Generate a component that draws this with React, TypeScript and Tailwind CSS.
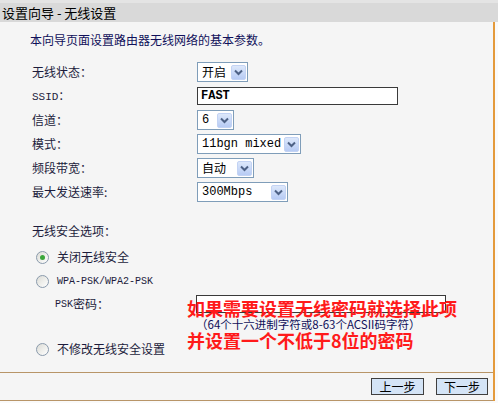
import React from "react";

const mono = "font-['Liberation_Mono','Noto_Sans_CJK_SC',monospace]";

function Arrow() {
  return (
    <span className="flex items-center justify-center w-[15px] h-[15px] mr-[1px] rounded-[2px] bg-gradient-to-b from-[#dde8fb] to-[#b7cbf4] border border-[#c3d3f4]">
      <svg width="9" height="7" viewBox="0 0 9 7" aria-hidden="true">
        <path d="M1 1.5 L4.5 5 L8 1.5" fill="none" stroke="#4d6185" strokeWidth="2" />
      </svg>
    </span>
  );
}

function Select({ value, width, latin }: { value: string; width: string; latin?: boolean }) {
  return (
    <div className={`flex items-center justify-between h-[20px] border border-[#7f9db9] bg-white ${width}`}>
      <span className={`pl-[4px] leading-none ${latin ? `${mono} text-[12px]` : "text-[12px]"} text-black`}>
        {value}
      </span>
      <Arrow />
    </div>
  );
}

function Radio({ checked }: { checked?: boolean }) {
  return (
    <span className="flex items-center justify-center w-[13px] h-[13px] rounded-full border border-[#8a9aac] bg-gradient-to-br from-[#dcdcd6] to-white">
      {checked && <span className="w-[5px] h-[5px] rounded-full bg-[#3aa63a]" />}
    </span>
  );
}

function Row({ label, children }: { label: React.ReactNode; children: React.ReactNode }) {
  return (
    <div className="flex items-center h-[24px]">
      <div className="w-[197px] pl-[32px] text-[12px] text-[#1c1c3c]">{label}</div>
      {children}
    </div>
  );
}

export default function App() {
  return (
    <div className="w-[498px] h-[403px] bg-[#fafafa] font-['Noto_Sans_CJK_SC',sans-serif] overflow-hidden">
      {/* Title bar */}
      <div className="h-[22px] bg-[#d9d9d9] border-t-[3px] border-[#e4e4e4] flex items-center pl-[2px] text-[13px] text-black">
        设置向导 - 无线设置
      </div>

      <div className="w-[495px] border-r-[2px] border-[#e49a3c]">
        {/* Body */}
        <div className="relative h-[351px] bg-[#f5f5f5] border-b border-[#b89568]">
          <p className="pt-[10px] pl-[30px] text-[12px] leading-[16px] text-[#10105a]">
            本向导页面设置路由器无线网络的基本参数。
          </p>

          <div className="mt-[12px]">
            <Row label="无线状态：">
              <Select value="开启" width="w-[51px]" />
            </Row>
            <Row label={<span className={`${mono} text-[11px]`}>SSID：</span>}>
              <div className="flex items-center h-[18px] w-[201px] border border-[#3a3a3a] bg-white pl-[3px]">
                <span className={`${mono} text-[12px] text-black font-bold`}>FAST</span>
              </div>
            </Row>
            <Row label="信道：">
              <Select value="6" width="w-[37px]" latin />
            </Row>
            <Row label="模式：">
              <Select value="11bgn mixed" width="w-[104px]" latin />
            </Row>
            <Row label="频段带宽：">
              <Select value="自动" width="w-[57px]" />
            </Row>
            <Row label="最大发送速率:">
              <Select value="300Mbps" width="w-[91px]" latin />
            </Row>
          </div>

          <div className="mt-[19px] pl-[32px] text-[12px] leading-[16px] text-[#1c1c3c]">无线安全选项：</div>

          <div className="mt-[6px] pl-[36px] text-[12px] text-[#1c1c3c]">
            <div className="flex items-center h-[24px] gap-[8px]">
              <Radio checked />
              <span>关闭无线安全</span>
            </div>
            <div className="flex items-center h-[24px] gap-[8px]">
              <Radio />
              <span className={`${mono} text-[10px]`}>WPA-PSK/WPA2-PSK</span>
            </div>
          </div>

          <div className="relative">
            <div className="flex items-start mt-[2px]">
              <div className="w-[196px] pl-[55px] h-[18px] flex items-center text-[12px] text-[#1c1c3c]">
                <span className={`${mono} text-[10px]`}>PSK</span>密码：
              </div>
              <div className="flex flex-col">
                <div className="h-[18px] w-[250px] border border-[#3a3a3a] bg-white" />
                <div className="mt-[5px] h-[12px] leading-[12px] flex items-center text-[11.5px] text-[#10105a] whitespace-nowrap">
                  （64个十六进制字符或8-63个ACSII码字符）
                </div>
              </div>
            </div>

            {/* Red annotation laid over the form */}
            <div className="absolute left-[187px] top-[5px] text-[18px] leading-[16px] font-bold text-[#ff1a1a] whitespace-nowrap">
              <div>如果需要设置无线密码就选择此项</div>
              <div className="mt-[16px]">并设置一个不低于8位的密码</div>
            </div>
          </div>

          <div className="mt-[7px] pl-[36px] flex items-center h-[24px] gap-[8px] text-[12px] text-[#1c1c3c]">
            <Radio />
            <span>不修改无线安全设置</span>
          </div>
        </div>

        {/* Footer */}
        <div className="h-[28px] bg-[#f5f5f5] border-b border-[#b89568] flex items-center justify-end gap-[12px] pr-[5px]">
          <button className="w-[53px] h-[17px] bg-[#d4e4f6] border border-[#3f3f3f] text-[12px] leading-none text-black">
            上一步
          </button>
          <button className="w-[52px] h-[17px] bg-[#d4e4f6] border border-[#3f3f3f] text-[12px] leading-none text-black">
            下一步
          </button>
        </div>
      </div>
    </div>
  );
}
